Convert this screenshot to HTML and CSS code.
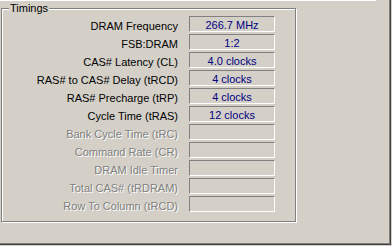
FILE: index.html
```html
<!DOCTYPE html>
<html lang="en">
<head>
  <meta charset="UTF-8">
  <title>Timings</title>
  <link rel="stylesheet" href="styles.css">
</head>
<body>
  <div class="page">
    <div class="group">
      <span class="group-title">Timings</span>
      <div class="rows">
        <div class="row"><span class="label">DRAM Frequency</span><span class="value">266.7 MHz</span></div>
        <div class="row"><span class="label">FSB:DRAM</span><span class="value">1:2</span></div>
        <div class="row"><span class="label">CAS# Latency (CL)</span><span class="value">4.0 clocks</span></div>
        <div class="row"><span class="label">RAS# to CAS# Delay (tRCD)</span><span class="value">4 clocks</span></div>
        <div class="row"><span class="label">RAS# Precharge (tRP)</span><span class="value">4 clocks</span></div>
        <div class="row"><span class="label">Cycle Time (tRAS)</span><span class="value">12 clocks</span></div>
        <div class="row off"><span class="label">Bank Cycle Time (tRC)</span><span class="value"></span></div>
        <div class="row off"><span class="label">Command Rate (CR)</span><span class="value"></span></div>
        <div class="row off"><span class="label">DRAM Idle Timer</span><span class="value"></span></div>
        <div class="row off"><span class="label">Total CAS# (tRDRAM)</span><span class="value"></span></div>
        <div class="row off"><span class="label">Row To Column (tRCD)</span><span class="value"></span></div>
      </div>
    </div>
  </div>
</body>
</html>
```

FILE: styles.css
```css
body {
  margin: 0;
  background: #d4d0c8;
  font-family: "Liberation Sans", Arial, sans-serif;
  font-size: 11px;
  color: #000;
}
.page {
  width: 391px;
  height: 245px;
  box-sizing: border-box;
  border-right: 1px solid #404040;
  border-bottom: 1px solid #404040;
  box-shadow: inset -1px -1px 0 #808080;
  background: #d4d0c8 linear-gradient(#fff, #fff) no-repeat 0 0 / 376px 1px;
  padding: 8px 0 0 1px;
}
.group {
  position: relative;
  width: 295px;
  height: 214px;
  box-sizing: border-box;
  border: 1px solid #808080;
  box-shadow: inset 1px 1px 0 #fff, 1px 1px 0 #fff;
  padding-top: 7px;
}
.group-title {
  position: absolute;
  left: 7px;
  top: -7px;
  padding: 0 1px;
  line-height: 13px;
  background: #d4d0c8;
}
.rows {
  display: grid;
  grid-auto-rows: 16px;
  row-gap: 2px;
}
.row {
  display: flex;
  align-items: stretch;
}
.label {
  width: 176px;
  margin-right: 11px;
  text-align: right;
  line-height: 16px;
  padding-top: 2px;
  box-sizing: border-box;
}
.value {
  width: 86px;
  box-sizing: border-box;
  border-style: solid;
  border-width: 1px;
  border-color: #808080 #fff #fff #808080;
  text-align: center;
  line-height: 14px;
  padding-top: 1px;
  color: #000080;
}
.off .label {
  color: #808080;
  text-shadow: 1px 1px 0 #fff;
}
```
